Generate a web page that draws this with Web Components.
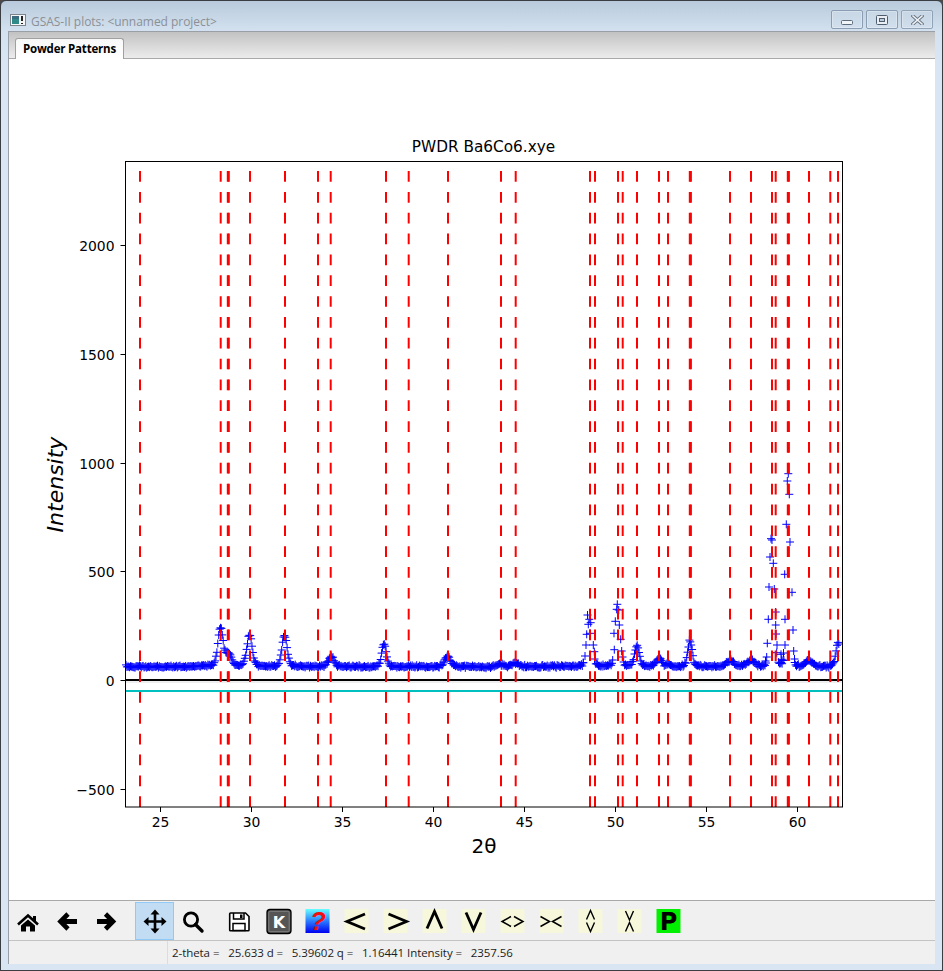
<!DOCTYPE html>
<html><head><meta charset="utf-8"><title>GSAS-II plots</title>
<style>html,body{margin:0;padding:0;background:#4a4a4a}</style></head>
<body>
<template id="t-window"><style>
:host{display:flex;flex-direction:column;box-sizing:border-box;width:943px;height:971px;border:1px solid #3a3d42;border-radius:6px 6px 0 0;padding:0 7px 6px;overflow:hidden;background:linear-gradient(#b8cadb 0,#d4e2f0 31px,#d9e5f2 60px,#d9e5f2 100%)}
.in{flex:1;display:flex;flex-direction:column;min-height:0;border:solid #9a9fa5;border-width:1px 0 0 1px;border-right:0;background:#f0f0f0}
</style><slot name="title"></slot><div class="in"><slot></slot></div></template>

<template id="t-title"><style>
:host{display:flex;align-items:flex-start;height:30px;flex:none;font:12px "Open Sans",sans-serif;color:#8b9096;margin-left:-7px;margin-right:-7px}
.ic{margin:13px 0 0 9px;width:16px;height:12px;flex:none}
.tx{margin:12px 0 0 5px;flex:1;white-space:pre;letter-spacing:-.04px}
.bs{display:flex;gap:3px;margin:9px 9px 0 0}
</style><svg class="ic" viewBox="0 0 16 12"><rect x=".5" y=".5" width="15" height="11" fill="#f4f6f8" stroke="#7d858c"/><rect x="2" y="2" width="7" height="8" fill="#2f8a88"/><rect x="2" y="2" width="7" height="3" fill="#3a6d80"/><rect x="11" y="2" width="2" height="5" fill="#222"/><rect x="11" y="9" width="2" height="1" fill="#222"/></svg><span class="tx"><slot></slot></span><div class="bs"><slot name="btn"></slot></div></template>

<template id="t-winbtn"><style>
:host{display:flex;align-items:center;justify-content:center;box-sizing:border-box;width:32px;height:19px;border:1px solid #8a9db2;border-radius:2px;background:linear-gradient(rgba(255,255,255,.12),rgba(255,255,255,.02));box-shadow:inset 0 0 0 1px rgba(255,255,255,.28)}
</style><slot></slot></template>

<template id="t-tabs"><style>
:host{display:block;flex:none;height:27px;box-sizing:border-box}
.strip{height:23px;background:linear-gradient(#c2c2c2,#ececec);border-bottom:1px solid #a9a9a9;padding:3px 0 0 6px;box-sizing:content-box;display:flex;align-items:flex-end}
.low{height:3px;background:#f0f0f0}
</style><div class="strip"><slot></slot></div><div class="low"></div></template>

<template id="t-tab"><style>
:host{display:block;box-sizing:border-box;height:21px;margin-bottom:-1px;padding:0 7px;border:1px solid #a0a0a0;border-bottom:0;border-radius:3px 3px 0 0;background:linear-gradient(#f8f8f8,#fff);font:bold 11.5px/20px "Open Sans",sans-serif;color:#000;letter-spacing:-.2px;white-space:nowrap}
</style><slot></slot></template>

<template id="t-plot"><style>
:host{display:block;flex:1;min-height:0;background:#fff;border-bottom:1px solid #a9a9a9}
svg{display:block;width:100%;height:100%}
text{font-family:"DejaVu Sans",sans-serif;fill:#000}
</style><svg id="s" viewBox="9 59 926 839"></svg></template>

<template id="t-toolbar"><style>
:host{display:flex;flex:none;height:40px;box-sizing:border-box;padding:1px 0 1px 0;background:#f0f0f0;border-bottom:1px solid #c4c4c4}
</style><slot></slot></template>

<template id="t-tool"><style>
:host{display:block;flex:none;width:39px;height:38px;box-sizing:border-box}
:host([active]){background:#c2dcf3;border:1px solid #90c8f6}
:host([active]) ::slotted(svg){margin:-1px}
::slotted(svg){display:block;width:39px;height:38px}
</style><slot></slot></template>

<template id="t-gap"><style>:host{display:block;flex:none;width:8.5px}</style></template>

<template id="t-status"><style>
:host{display:flex;flex:none;height:23px;background:#f0f0f0;font:11.5px/23px "Open Sans",sans-serif;color:#1c1c1c;white-space:pre}
.a{width:158px;flex:none;border-right:1px solid #dcdcdc}
.b{padding-left:4px;letter-spacing:-.06px}
</style><div class="a"></div><div class="b"><slot></slot></div></template>

<g2-window>
  <g2-title slot="title">GSAS-II plots: &lt;unnamed project&gt;
    <g2-winbtn slot="btn"><svg width="13" height="6" viewBox="0 0 13 6" style="margin-top:6px"><rect x=".5" y=".5" width="11" height="4" rx="1" fill="#f2f5f8" stroke="#5d6b7a"/></svg></g2-winbtn>
    <g2-winbtn slot="btn"><svg width="12" height="10" viewBox="0 0 12 10"><rect x=".5" y=".5" width="11" height="9" rx="1" fill="#e8eef4" stroke="#4e5c6b"/><rect x="3.5" y="3.5" width="5" height="3" fill="#bccbda" stroke="#4e5c6b"/></svg></g2-winbtn>
    <g2-winbtn slot="btn" style="opacity:.9"><svg width="13" height="10" viewBox="0 0 13 10"><path d="M2 1l9 8M11 1l-9 8" stroke="#5e6a77" stroke-width="3.4" stroke-linecap="square"/><path d="M2 1l9 8M11 1l-9 8" stroke="#f2f5f8" stroke-width="1.6" stroke-linecap="square"/></svg></g2-winbtn>
  </g2-title>
  <g2-tabs><g2-tab>Powder Patterns</g2-tab></g2-tabs>
  <g2-plot></g2-plot>
  <g2-toolbar>
    <g2-tool><svg viewBox="9 900 39 38"><path d="M18 922.5L28 913.5l10 9" fill="none" stroke="#000" stroke-width="2.6"/><path d="M33 914h3v5h-3z"/><path d="M21 923.5L28 917.5l7 6V929.5h-5v-5h-4v5h-5z"/></svg></g2-tool>
    <g2-tool><svg viewBox="48 900 39 38"><path d="M61 919.5h16" stroke="#000" stroke-width="5" fill="none"/><path d="M68 912l-7.5 7.5 7.5 7.5" fill="none" stroke="#000" stroke-width="4.6"/></svg></g2-tool>
    <g2-tool><svg viewBox="87 900 39 38"><path d="M97 919.5h16" stroke="#000" stroke-width="5" fill="none"/><path d="M105.5 912l7.5 7.5-7.5 7.5" fill="none" stroke="#000" stroke-width="4.6"/></svg></g2-tool>
    <g2-gap></g2-gap>
    <g2-tool active><svg viewBox="134 900 39 38"><path d="M154 911v17M146 919.5h17" stroke="#000" stroke-width="2.6" fill="none"/><path d="M154 907.5l4.5 5h-9zM154 931.5l4.5-5h-9zM142.500 919.500l5-4.500v9zM165.500 919.500l-5-4.500v9z"/></svg></g2-tool>
    <g2-tool><svg viewBox="173 900 39 38"><circle cx="190" cy="917.500" r="6.600" fill="none" stroke="#000" stroke-width="2.800"/><path d="M194.500 922.500l6.500 6.500" stroke="#000" stroke-width="3.400" stroke-linecap="round"/></svg></g2-tool>
    <g2-gap></g2-gap>
    <g2-tool><svg viewBox="220.500 900 39 38"><path d="M230 911h15l3.500 3.500V928a.8.800 0 0 1-.8.800H230a.8.800 0 0 1-.8-.8V911.800a.8.800 0 0 1 .8-.8z" fill="#fff" stroke="#000" stroke-width="1.600"/><path d="M233 911v6h10.500v-6" fill="none" stroke="#000" stroke-width="1.500"/><rect x="239.500" y="912.500" width="2.500" height="3.500"/><rect x="232.500" y="921.500" width="12" height="7" fill="none" stroke="#000" stroke-width="1.500"/></svg></g2-tool>
    <g2-tool><svg viewBox="259.500 900 39 38"><rect x="266.500" y="907.500" width="24" height="24" rx="3" fill="#555" stroke="#000" stroke-width="1.300"/><rect x="268.300" y="909.300" width="20.400" height="20.400" rx="1.500" fill="none" stroke="#8a8a8a" stroke-width=".8"/><text x="278.500" y="925.500" text-anchor="middle" font-family="DejaVu Sans" font-weight="bold" font-size="16" fill="#fff">K</text></svg></g2-tool>
    <g2-tool><svg viewBox="298.500 900 39 38"><defs><linearGradient id="gq" x1="0" y1="0" x2="0" y2="1"><stop offset="0" stop-color="#66ffff"/><stop offset=".5" stop-color="#2a7dff"/><stop offset="1" stop-color="#0000f0"/></linearGradient></defs><rect x="305" y="907" width="24" height="24" fill="url(#gq)"/><text x="317.500" y="928" text-anchor="middle" font-family="Liberation Sans" font-weight="bold" font-style="italic" font-size="26" fill="#f01010">?</text></svg></g2-tool>
    <g2-tool><svg viewBox="337.500 900 39 38"><rect x="344" y="907" width="24" height="24" fill="#f7f7dc"/><path d="M364.500 912l-18 7.500 18 7.500" fill="none" stroke="#000" stroke-width="2.800"/></svg></g2-tool>
    <g2-tool><svg viewBox="376.500 900 39 38"><rect x="383" y="907" width="24" height="24" fill="#f7f7dc"/><path d="M388 912l18 7.500-18 7.500" fill="none" stroke="#000" stroke-width="2.800"/></svg></g2-tool>
    <g2-tool><svg viewBox="415.500 900 39 38"><rect x="422" y="907" width="24" height="24" fill="#f7f7dc"/><path d="M426.500 926.500l7.500-17 7.500 17" fill="none" stroke="#000" stroke-width="2.800"/></svg></g2-tool>
    <g2-tool><svg viewBox="454.500 900 39 38"><rect x="461" y="907" width="24" height="24" fill="#f7f7dc"/><path d="M465.500 910.500l7.500 17 7.500-17" fill="none" stroke="#000" stroke-width="2.800"/></svg></g2-tool>
    <g2-tool><svg viewBox="493.500 900 39 38"><rect x="500" y="907" width="24" height="24" fill="#f7f7dc"/><path d="M510.500 914.500l-9 5 9 5M513.500 914.500l9 5-9 5" fill="none" stroke="#000" stroke-width="1.500"/></svg></g2-tool>
    <g2-tool><svg viewBox="532.500 900 39 38"><rect x="539" y="907" width="24" height="24" fill="#f7f7dc"/><path d="M540 914.500l9 5-9 5M561 914.500l-9 5 9 5" fill="none" stroke="#000" stroke-width="1.500"/></svg></g2-tool>
    <g2-tool><svg viewBox="571.500 900 39 38"><rect x="578" y="907" width="24" height="24" fill="#f7f7dc"/><path d="M586 917.500l4-9 4 9M586 920.500l4 9 4-9" fill="none" stroke="#000" stroke-width="1.400"/></svg></g2-tool>
    <g2-tool><svg viewBox="610.500 900 39 38"><rect x="617" y="907" width="24" height="24" fill="#f7f7dc"/><path d="M625 909l4 9 4-9M625 929.500l4-9 4 9" fill="none" stroke="#000" stroke-width="1.400"/></svg></g2-tool>
    <g2-tool><svg viewBox="649.500 900 39 38"><rect x="656" y="907" width="24" height="24" fill="#00f000"/><text x="668" y="928" text-anchor="middle" font-family="DejaVu Sans" font-weight="bold" font-size="24" fill="#000">P</text></svg></g2-tool>
  </g2-toolbar>
  <g2-status>2-theta =   25.633 d =   5.39602 q =   1.16441 Intensity =   2357.56</g2-status>
</g2-window>

<script>
function def(name,tid,init){
  customElements.define(name,class extends HTMLElement{
    constructor(){super();const r=this.attachShadow({mode:'open'});r.appendChild(document.getElementById(tid).content.cloneNode(true));if(init)init(r)}
  });
}
function drawPlot(r){
  const L=125.5,R=842.5,T=160.5,B=806;
  const X=t=>160.5+(t-25)*18.2, Y=v=>679-v*0.2175;
  let h='';
  // reference lines
  h+=`<line x1="${L}" x2="${R}" y1="679" y2="679" stroke="#000" stroke-width="2"/>`;
  h+=`<line x1="${L}" x2="${R}" y1="681" y2="681" stroke="#ddd" stroke-width="1"/>`;
  h+=`<line x1="${L}" x2="${R}" y1="690" y2="690" stroke="#00bfbf" stroke-width="2"/>`;
  // observed markers
  let seed=12345;const rnd=()=>{seed=(seed*1664525+1013904223)>>>0;return seed/4294967296};
  const pk=[[220.5,39,3.6],[228.5,13,4],[249.5,32,3.6],[284.5,31,3.6],[331,10,4],[384,24,3],[447.5,10,4],[501,2,4],[516,4,4],[590,12,5],[618,12,5],[637,20,3.2],[659,8,4],[668,2,3],[690,26,3],[730,6,5],[751,6,5],[772,12,5],[788,12,5],[809,6,5],[838,24,3]];
  const skip=[[584,595],[612,623],[766,778],[784,794]];
  let d='';
  const add=(x,y)=>{d+=`M${(x-4).toFixed(1)} ${y.toFixed(1)}h8M${x.toFixed(1)} ${(y-4).toFixed(1)}v8`};
  for(let x=L+.5;x<=R+2;x+=.9){
    if(skip.some(s=>x>=s[0]&&x<=s[1]))continue;
    let y=665.6+(rnd()+rnd()-1)*1.7;
    for(const p of pk){const u=(x-p[0])/p[2];y-=p[1]*(.82*Math.exp(-u*u)+.18/(1+u*u))}
    if(x>R-3.5){continue}
    add(x,y);
  }
  const ex=[[589.3,618.3],[590.7,621.7],[588.3,623.3],[586.7,633.3],[590,632.3],[586,644],[593.3,644],[585,655],[594.3,650.7],[583.3,661.7],[594.5,658],[587.5,614],
  [617.3,603.3],[616.7,608.3],[618.7,609],[615.3,620.3],[619.3,624],[614,632.3],[620.7,638.3],[614.3,648.7],[621.7,650],[612.7,659],[622.5,656],
  [771,537.7],[772,539],[770,556],[773.3,562.3],[769,586],[774.3,588],[768.3,618.3],[775.7,611],[775.7,624],[776,633],[767.3,642.3],[777,644],[766.7,656],[776.7,651.7],[781,653.3],[781.7,658.3],[765.5,660],
  [788.3,472.7],[787.300,480],[789.300,493.300],[786.300,523.300],[790,541],[784.700,573.300],[792,591.300],[785,618.300],[793,629],[785,644],[793.700,650],[783.500,652],[794.500,658]];
  for(const e of ex)add(e[0],e[1]);
  h+=`<path d="${d}" fill="none" stroke="#0000ff" stroke-width="1"/>`;
  // reflection ticks
  const refl=[140,220.7,227.8,228.8,250,285,318,330.7,386,408.7,448,501,515.7,590,595,618,622.700,637,659,668,689.800,690.900,730,751,772,775.700,787.800,788.900,809,830.300,838];
  for(const x of refl)h+=`<path d="M${x} ${B}V${T+.5}" stroke="#f00" stroke-width="2" stroke-dasharray="10.7 10.14" fill="none"/>`;
  // frame
  h+=`<rect x="${L}" y="${T}" width="${R-L}" height="${B-T}" fill="none" stroke="#000" stroke-width="1"/>`;
  // ticks + labels
  for(let t=25;t<=60;t+=5){const x=X(t);h+=`<line x1="${x}" x2="${x}" y1="${B}" y2="${B+5}" stroke="#000"/><text x="${x}" y="826" text-anchor="middle" font-size="13.9">${t}</text>`}
  for(const v of [-500,0,500,1000,1500,2000]){const y=Math.round(Y(v))+.5;h+=`<line x1="${L-5}" x2="${L}" y1="${y}" y2="${y}" stroke="#000"/><text x="114.500" y="${y+5}" text-anchor="end" font-size="13.9">${v<0?'\u2212'+(-v):v}</text>`}
  h+=`<text x="483.500" y="151" text-anchor="middle" font-size="15.3">PWDR Ba6Co6.xye</text>`;
  h+=`<text x="484" y="852" text-anchor="middle" font-size="20">2\u03b8</text>`;
  h+=`<text transform="translate(63 483.500) rotate(-90)" text-anchor="middle" font-size="22" font-style="italic">Intensity</text>`;
  r.getElementById('s').innerHTML=h;
}
def('g2-window','t-window');def('g2-title','t-title');def('g2-winbtn','t-winbtn');def('g2-tabs','t-tabs');def('g2-tab','t-tab');
def('g2-plot','t-plot',drawPlot);def('g2-toolbar','t-toolbar');def('g2-tool','t-tool');def('g2-gap','t-gap');def('g2-status','t-status');
</script>
</body></html>
